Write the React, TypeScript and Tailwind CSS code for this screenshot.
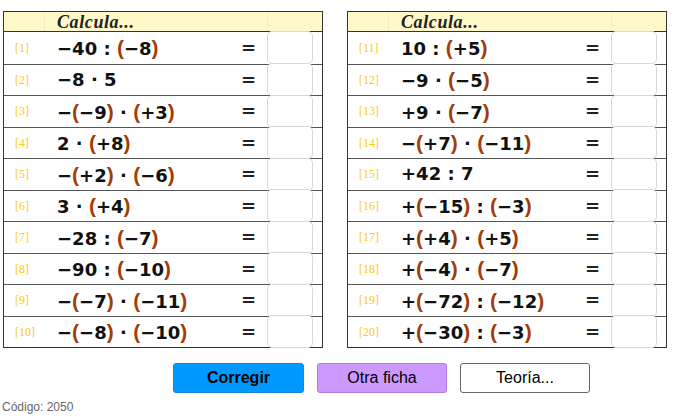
import React from 'react'

const left = [
  '−40 : (−8)',
  '−8 · 5',
  '−(−9) · (+3)',
  '2 · (+8)',
  '−(+2) · (−6)',
  '3 · (+4)',
  '−28 : (−7)',
  '−90 : (−10)',
  '−(−7) · (−11)',
  '−(−8) · (−10)',
]

const right = [
  '10 : (+5)',
  '−9 · (−5)',
  '+9 · (−7)',
  '−(+7) · (−11)',
  '+42 : 7',
  '+(−15) : (−3)',
  '+(+4) · (+5)',
  '+(−4) · (−7)',
  '+(−72) : (−12)',
  '+(−30) : (−3)',
]

function Expr({ text }: { text: string }) {
  return (
    <span className="whitespace-pre">
      {text.split('').map((ch, i) =>
        ch === '(' || ch === ')' ? (
          <span
            key={i}
            className="text-[21px] font-bold text-[#a33c06]"
            style={{ fontFamily: '"Liberation Sans", sans-serif' }}
          >
            {ch}
          </span>
        ) : (
          <span key={i}>{ch}</span>
        )
      )}
    </span>
  )
}

function Sheet({ rows, start }: { rows: string[]; start: number }) {
  return (
    <div className="w-[320px] border border-[#333] bg-white">
      <div className="flex h-[20px] items-center border-b border-[#333] bg-[#fff8c8]">
        <div className="h-full w-[41px] border-r border-dotted border-[#ece4b8]" />
        <div
          className="pl-[12px] text-[18px] font-bold italic leading-none tracking-[0.6px] text-[#222]"
          style={{ fontFamily: '"Liberation Serif", serif' }}
        >
          Calcula...
        </div>
        <div className="ml-auto h-full w-[55px] border-l border-dotted border-[#ece4b8]" />
      </div>
      {rows.map((r, i) => (
        <div
          key={i}
          className={`flex h-[31.5px] items-center pl-[11px] ${i > 0 ? 'border-t border-[#555]' : ''}`}
        >
          <div
            className="w-[42px] text-[12px] leading-none text-[#ffcc00]"
            style={{ fontFamily: '"Liberation Serif", serif' }}
          >
            [{start + i}]
          </div>
          <div
            className="flex h-full w-[184px] items-center text-[18px] font-bold leading-none text-[#111]"
            style={{ fontFamily: '"DejaVu Sans", sans-serif' }}
          >
            <Expr text={r} />
          </div>
          <div
            className="text-[18px] font-bold leading-none text-[#222]"
            style={{ fontFamily: '"DejaVu Sans", sans-serif' }}
          >
            =
          </div>
          <div className="relative z-10 ml-auto mr-[9px] h-[33px] w-[46px] rounded-[5px] border border-[#d8d8d8] bg-white" />
        </div>
      ))}
    </div>
  )
}

export default function App() {
  return (
    <div
      className="relative h-[417px] w-[675px] overflow-hidden bg-white"
      style={{ fontFamily: '"Liberation Sans", Arial, sans-serif' }}
    >
      <div className="flex gap-[24px] pl-[3px] pt-[11px]">
        <Sheet rows={left} start={1} />
        <Sheet rows={right} start={11} />
      </div>
      <div className="mt-[15px] flex gap-[13px] pl-[173px]">
        <button className="h-[30px] w-[131px] rounded-[3px] border border-[#1a84d6] bg-[#0099ff] text-[16px] font-bold text-black">
          Corregir
        </button>
        <button className="h-[30px] w-[130px] rounded-[3px] border border-[#a97ee0] bg-[#cc99ff] text-[16px] text-black">
          Otra ficha
        </button>
        <button className="h-[30px] w-[130px] rounded-[3px] border-[1.5px] border-[#666] bg-white text-[16px] text-black">
          Teoría...
        </button>
      </div>
      <div className="absolute bottom-[4px] left-[2px] text-[12px] leading-none text-[#666]">
        Código: 2050
      </div>
    </div>
  )
}
